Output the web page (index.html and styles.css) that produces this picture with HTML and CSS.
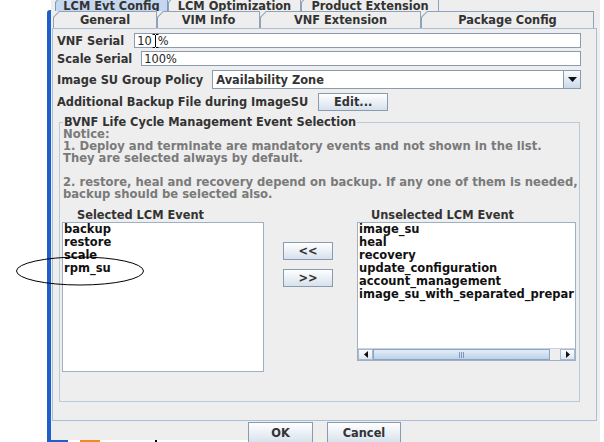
FILE: index.html
```html
<!DOCTYPE html>
<html>
<head>
<meta charset="utf-8">
<link rel="stylesheet" href="styles.css">
</head>
<body>
<div class="screen">
  <div class="outside"></div>
  <div class="winborder"></div>
  <div class="dialog">
    <div class="tabrow row1">
      <div class="tab sel t-evt"><div class="tab-in">LCM Evt Config</div></div>
      <div class="tab t-opt"><div class="tab-in">LCM Optimization</div></div>
      <div class="tab t-prod"><div class="tab-in">Product Extension</div></div>
    </div>
    <div class="tabrow row2">
      <div class="tab t-gen"><div class="tab-in">General</div></div>
      <div class="tab t-vim"><div class="tab-in">VIM Info</div></div>
      <div class="tab t-vnf"><div class="tab-in">VNF Extension</div></div>
      <div class="tab t-pkg"><div class="tab-in">Package Config</div></div>
    </div>
    <div class="panel">
      <div class="field f1">
        <span class="lbl">VNF Serial</span>
        <div class="input">10<svg class="ibeam" width="7" height="14" viewBox="0 0 7 14"><path d="M0.5 0.5h6M3.5 0.5v13M0.5 13.5h6" stroke="#fff" stroke-width="3" fill="none"/><path d="M0.5 0.5h2.5M4 0.5h2.5M3.5 1v12M0.5 13.5h2.5M4 13.5h2.5" stroke="#000" stroke-width="1" fill="none"/></svg>%</div>
      </div>
      <div class="field f2">
        <span class="lbl">Scale Serial</span>
        <div class="input">100%</div>
      </div>
      <div class="field f3">
        <span class="lbl">Image SU Group Policy</span>
        <div class="combo">
          <div class="combo-text">Availability Zone</div>
          <div class="combo-btn"><svg width="9" height="5" viewBox="0 0 9 5"><path d="M0 0h9L4.5 5z" fill="#111"/></svg></div>
        </div>
      </div>
      <div class="field f4">
        <span class="lbl">Additional Backup File during ImageSU</span>
        <button class="btn edit">Edit...</button>
      </div>
      <fieldset class="group">
        <legend>BVNF Life Cycle Management Event Selection</legend>
        <div class="notice">
          <div class="nl">Notice:</div>
          <div class="nl">1. Deploy and terminate are mandatory events and not shown in the list.</div>
          <div class="nl">They are selected always by default.</div>
          <div class="nl"></div>
          <div class="nl">2. restore, heal and recovery depend on backup. If any one of them is needed,</div>
          <div class="nl">backup should be selected also.</div>
        </div>
        <div class="lists">
          <div class="col col-left">
            <div class="list-label">Selected LCM Event</div>
            <div class="list list-l">
              <div class="item">backup</div>
              <div class="item">restore</div>
              <div class="item">scale</div>
              <div class="item">rpm_su</div>
            </div>
          </div>
          <div class="mid">
            <button class="btn mv">&lt;&lt;</button>
            <button class="btn mv">&gt;&gt;</button>
          </div>
          <div class="col col-right">
            <div class="list-label">Unselected LCM Event</div>
            <div class="list list-r">
              <div class="items">
                <div class="item">image_su</div>
                <div class="item">heal</div>
                <div class="item">recovery</div>
                <div class="item">update_configuration</div>
                <div class="item">account_management</div>
                <div class="item">image_su_with_separated_prepar</div>
              </div>
              <div class="hscroll">
                <div class="sb-arrow"><svg width="4" height="7" viewBox="0 0 4 7"><path d="M4 0v7L0 3.5z" fill="#111"/></svg></div>
                <div class="sb-thumb"><span class="grip"></span></div>
                <div class="sb-track"></div>
                <div class="sb-arrow"><svg width="4" height="7" viewBox="0 0 4 7"><path d="M0 0v7L4 3.5z" fill="#111"/></svg></div>
              </div>
            </div>
          </div>
        </div>
      </fieldset>
    </div>
    <div class="actions">
      <button class="btn ok">OK</button>
      <button class="btn cancel">Cancel</button>
    </div>
  </div>
</div>
<svg class="mark" width="132" height="32" viewBox="0 0 132 32"><ellipse cx="65" cy="15" rx="63.5" ry="14" fill="none" stroke="#000" stroke-width="1"/></svg>
<div class="under">
  <span class="under-blue"></span>
  <span class="under-orange"></span>
  <span class="under-dot"></span>
</div>
</body>
</html>
```
FILE: styles.css
```css
* { box-sizing: border-box; }
html, body { margin: 0; padding: 0; }
body {
  width: 604px;
  height: 442px;
  overflow: hidden;
  background: #fff;
  font-family: "DejaVu Sans", sans-serif;
  font-size: 11.4px;
  font-weight: bold;
  color: #333;
  position: relative;
}
.screen { display: flex; height: 442px; }
.outside { width: 47px; flex: none; }
.winborder {
  width: 4px; flex: none; margin-top: 10px;
  background: #1f5fc9; border-top-left-radius: 3px;
}
.dialog {
  width: 549px; flex: none; background: #eeeeee;
  display: flex; flex-direction: column;
}

/* tabs */
.tabrow { display: flex; flex: none; }
.row1 { margin-top: -4px; margin-left: 4px; height: 15px; }
.row2 { margin-left: 2px; height: 17px; }
.tab {
  height: 100%; flex: none;
  background: #8fa3b8;
  padding: 1px 1px 0 1px;
  clip-path: polygon(6px 0, 100% 0, 100% 100%, 0 100%, 0 6px);
}
.tab-in {
  height: 100%;
  background: #eeeeee;
  clip-path: polygon(5.4px 0, 100% 0, 100% 100%, 0 100%, 0 5.4px);
  display: flex; align-items: center; justify-content: center;
  line-height: 12px; white-space: nowrap; color: #333;
}
.row1 .tab-in { padding-top: 3px; }
.tab.sel { background: #7d9bc2; }
.tab.sel .tab-in { background: #c5d7ee; }
.t-evt { width: 113px; }
.t-opt { width: 133px; }
.t-prod { width: 138px; }
.t-gen { width: 104px; }
.t-vim { width: 103px; }
.t-vnf { width: 161px; }
.t-pkg { width: 173px; }

/* panel */
.panel {
  flex: none;
  margin-left: 1px;
  width: 545px; height: 393px;
  border: 1px solid #a9bfd6;
  padding: 4px 15px 0 4px;
  display: flex; flex-direction: column;
}
.field { display: flex; align-items: center; gap: 10px; flex: none; }
.f1 { height: 15px; }
.f2 { height: 15px; margin-top: 3px; gap: 9px; }
.f3 { height: 19px; margin-top: 4px; gap: 9px; }
.f4 { height: 18px; margin-top: 4px; }
.lbl { white-space: nowrap; color: #333; }
.input {
  flex: 1; height: 100%;
  background: #fff; border: 1px solid #8a9bb0;
  font-weight: normal; color: #222;
  padding-left: 2px;
  display: flex; align-items: center;
}
.ibeam { flex: none; margin: 0 -1px 0 0; }
.combo {
  flex: 1; height: 100%;
  background: #fff; border: 1px solid #8a9bb0;
  display: flex;
}
.combo-text { flex: 1; padding-left: 3px; display: flex; align-items: center; color: #333; }
.combo-btn {
  width: 17px; flex: none;
  border-left: 1px solid #8a9bb0;
  background: linear-gradient(#f8fbfe, #cad9ea);
  display: flex; align-items: center; justify-content: center;
}
.btn {
  font: inherit; color: #333;
  border: 1px solid #8a9bb0;
  background: linear-gradient(#ffffff, #d6e1ed);
  padding: 0; margin: 0;
  display: flex; align-items: center; justify-content: center;
}
.edit { width: 70px; height: 18px; }

/* group */
.group {
  margin: 5px 1px 0 2px;
  border: 1px solid #b9cadb;
  padding: 0 4px 29px 2px;
  min-width: 0;
  flex: none;
}
.group legend {
  padding: 0 1px; margin-left: 1px;
  line-height: 12px; color: #333;
}
.notice {
  color: #7a7a7a;
  font-size: 11.6px;
  padding-left: 1px; white-space: nowrap;
}
.nl { height: 12px; line-height: 12px; }
.lists { display: flex; margin-top: 9px; }
.col { flex: none; display: flex; flex-direction: column; }
.col-left { width: 202px; }
.col-right { width: 219px; margin-left: 24px; }
.list-label { line-height: 12px; margin-bottom: 1px; padding-left: 15px; color: #333; white-space: nowrap; }
.col-right .list-label { padding-left: 14px; }
.list {
  background: #fff; border: 1px solid #9fb0c2;
  font-size: 11.5px; color: #111; line-height: 13px;
  overflow: hidden;
}
.list-l { height: 150px; padding-left: 1px; }
.list-r { height: 139px; display: flex; flex-direction: column; }
.items { flex: 1; padding-left: 1px; white-space: nowrap; overflow: hidden; }
.item { white-space: nowrap; }
.mid {
  flex: none; width: 50px; margin-left: 19px;
  padding-top: 33px;
  display: flex; flex-direction: column; gap: 9px;
}
.mv { height: 18px; width: 50px; }

/* horizontal scrollbar */
.hscroll { height: 12px; flex: none; display: flex; background: #eeeeee; border-top: 1px solid #c8d3de; }
.sb-arrow {
  width: 15px; flex: none;
  background: linear-gradient(#fbfdff, #dce6f1);
  border: 1px solid #a8b8ca;
  display: flex; align-items: center; justify-content: center;
}
.sb-thumb {
  width: 177px; flex: none;
  background: linear-gradient(#e3edf8, #bcd1e8);
  border: 1px solid #8aa4c4;
  display: flex; align-items: center; justify-content: center;
}
.grip {
  width: 6px; height: 6px;
  background: repeating-linear-gradient(90deg, #7f98b8 0 1px, transparent 1px 2px);
}
.sb-track { flex: 1; }

/* bottom buttons */
.actions { display: flex; flex: none; margin-top: 1px; padding-left: 197px; gap: 14px; }
.ok { width: 65px; height: 22px; }
.cancel { width: 74px; height: 22px; }

/* overlays */
.mark { position: absolute; left: 15px; top: 256px; }
.under {
  position: absolute; left: 47px; top: 440px;
  width: 201px; height: 2px; background: #fff;
}
.under-blue { position: absolute; left: 0; top: 0; width: 21px; height: 2px; background: #1f5fc9; }
.under-orange { position: absolute; left: 33px; top: 0; width: 20px; height: 2px; background: #f08a24; }
.under-dot { position: absolute; left: 108px; top: 0; width: 2px; height: 2px; background: #000; }
```
